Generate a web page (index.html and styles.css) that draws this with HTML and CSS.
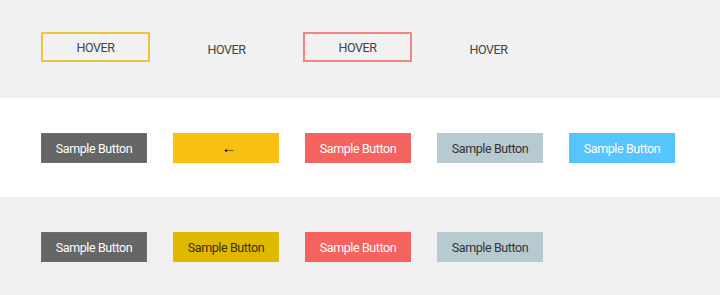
FILE: index.html
```html
<!DOCTYPE html>
<html lang="en">
  <head>
    <meta charset="UTF-8" />
    <meta name="viewport" content="width=device-width, initial-scale=1.0" />
    <title>Buttons</title>
    <link rel="stylesheet" href="styles.css">
  </head>
  <body>
    <!-- Hàng 1: nút viền -->
    <section class="demo demo--outline">
      <button class="btn btn--outline btn--outline-yellow">HOVER</button>
      <button class="btn btn--outline btn--outline-none">HOVER</button>
      <button class="btn btn--outline btn--outline-red">HOVER</button>
      <button class="btn btn--outline btn--outline-none">HOVER</button>
    </section>

    <!-- Hàng 2: nút màu -->
    <section class="demo demo--white">
      <button class="btn btn--dark">Sample Button</button>
      <button class="btn btn--yellow">&larr;</button>
      <button class="btn btn--red">Sample Button</button>
      <button class="btn btn--grey">Sample Button</button>
      <button class="btn btn--blue">Sample Button</button>
    </section>

    <!-- Hàng 3 -->
    <section class="demo demo--last">
      <button class="btn btn--dark">Sample Button</button>
      <button class="btn btn--gold">Sample Button</button>
      <button class="btn btn--red">Sample Button</button>
      <button class="btn btn--grey">Sample Button</button>
    </section>
  </body>
</html>
```

FILE: styles.css
```css
* {
  box-sizing: border-box;
}

body {
  margin: 0;
  background-color: #f1f1f1;
  font-family: Roboto, "Liberation Sans", sans-serif;
}

/* Các hàng demo */
.demo {
  display: flex;
  align-items: center;
  gap: 26px;
  height: 98px;
  padding: 0 41px;
  background-color: #f1f1f1;
}

.demo--outline {
  gap: 22px;
  padding-bottom: 4px;
}

.demo--white {
  height: 99px;
  background-color: #fff;
  padding-top: 1px;
}

.demo--last {
  background-color: #f0f0f0;
  padding-top: 2px;
}

/* Nút */
.btn {
  width: 106px;
  height: 30px;
  padding: 0;
  border: none;
  font-family: inherit;
  font-size: 12.5px;
  letter-spacing: -0.4px;
  color: #fff;
  cursor: pointer;
}

.btn--outline {
  width: 109px;
  background: transparent;
  color: #444;
  border: 2px solid transparent;
  padding-top: 1px;
}

.btn--outline-yellow {
  border-color: #ecc53f;
}

.btn--outline-red {
  border-color: #f58484;
}

.btn--outline-none {
  padding-top: 4px;
}

.btn--dark {
  background-color: #666;
  border: 1px solid #6e6e6e;
}

.btn--yellow {
  background-color: #f8c011;
  color: #000;
  font-size: 15px;
  font-weight: bold;
  letter-spacing: 0;
  padding-left: 6px;
}

.btn--gold {
  background-color: #e1b800;
  color: #3a3000;
}

.btn--red {
  background-color: #f6625d;
}

.btn--grey {
  background-color: #b7cad1;
  color: #333;
}

.btn--blue {
  background-color: #56c4fd;
}
```
